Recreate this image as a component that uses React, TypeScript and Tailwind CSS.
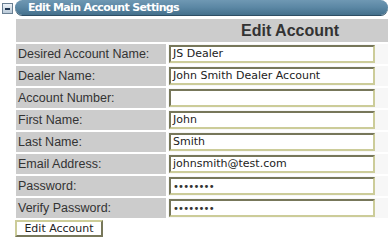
import React from "react";

const rows: { label: string; value: string; password?: boolean }[] = [
  { label: "Desired Account Name:", value: "JS Dealer" },
  { label: "Dealer Name:", value: "John Smith Dealer Account" },
  { label: "Account Number:", value: "" },
  { label: "First Name:", value: "John" },
  { label: "Last Name:", value: "Smith" },
  { label: "Email Address:", value: "johnsmith@test.com" },
  { label: "Password:", value: "••••••••", password: true },
  { label: "Verify Password:", value: "••••••••", password: true },
];

export default function App() {
  return (
    <div className="w-[388px] h-[240px] bg-white overflow-hidden">
      <div className="flex items-start h-[16px]">
        <div className="mt-[3px] ml-[2px] w-[11px] h-[11px] border border-[#6a7f92] bg-gradient-to-b from-[#eef3f8] to-[#b9c9d8] flex items-center justify-center">
          <div className="w-[5px] h-[2px] bg-[#1f3550]" />
        </div>
        <div className="ml-[2px] flex-1 h-[15px] rounded-l-[8px] rounded-r-[8px] bg-gradient-to-b from-[#6f98b3] via-[#5b87a4] to-[#44708c] shadow-[0_1px_0_#2e4e64] flex items-center pl-[13px]">
          <span className="text-white font-bold text-[11px] tracking-[-0.65px] leading-none [font-family:'DejaVu_Sans',Verdana,sans-serif]">
            Edit Main Account Settings
          </span>
        </div>
      </div>
      <div className="ml-[16px] mt-[3px] flex flex-col gap-[2px]">
        <div className="h-[23px] bg-[#cccccc] flex items-center pl-[225px]">
          <span className="text-[16px] font-bold text-[#333333] [font-family:'Liberation_Sans',Arial,sans-serif]">
            Edit Account
          </span>
        </div>
        {rows.map((r) => (
          <div key={r.label} className="grid grid-cols-[150px_1fr] gap-[2px] h-[20px]">
            <div className="bg-[#cccccc] flex items-center pl-[2px] text-[12.5px] text-[#333333] [font-family:'Liberation_Sans',Arial,sans-serif]">
              {r.label}
            </div>
            <div className="bg-[#f7f7f7] pl-[1px] pt-[1px]">
              <div className="w-[206px] h-[18px] bg-white border-2 border-t-[#77775a] border-l-[#77775a] border-b-[#cccc99] border-r-[#cccc99] flex items-center pl-[2px] text-[11px] text-[#222222] [font-family:'DejaVu_Sans',Verdana,sans-serif] whitespace-nowrap overflow-hidden">
                {r.password ? (
                  <span className="text-[10px] tracking-[-0.8px] text-[#333333]">{r.value}</span>
                ) : (
                  r.value
                )}
              </div>
            </div>
          </div>
        ))}
      </div>
      <div className="ml-[15px] mt-[2px]">
        <button className="w-[88px] h-[17px] bg-white border-2 border-t-[#cccc99] border-l-[#cccc99] border-b-[#77775a] border-r-[#77775a] text-[11px] text-[#222222] leading-none [font-family:'DejaVu_Sans',Verdana,sans-serif] flex items-center justify-center">
          Edit Account
        </button>
      </div>
    </div>
  );
}
